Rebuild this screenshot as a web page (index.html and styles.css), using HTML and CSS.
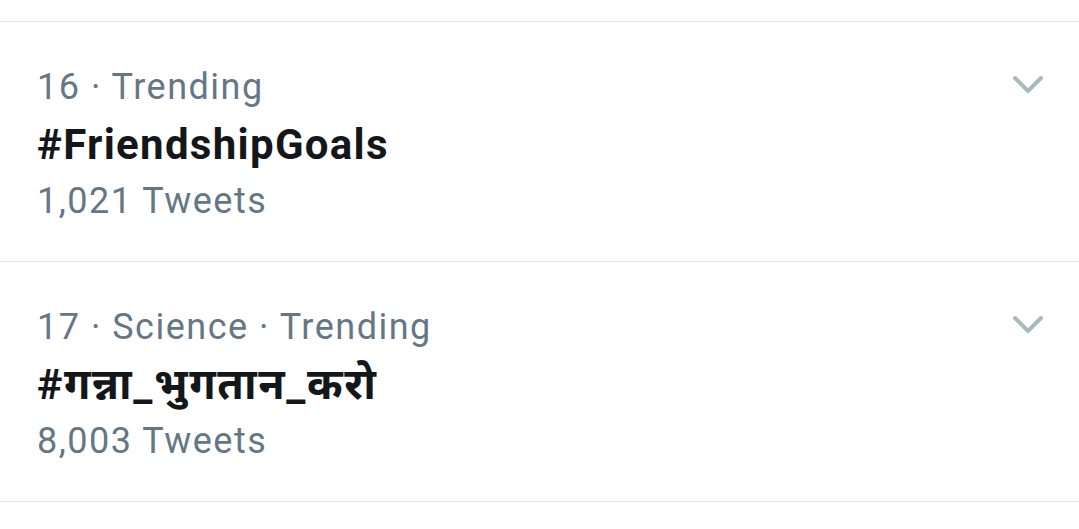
FILE: index.html
```html
<!DOCTYPE html>
<html>
<head>
<meta charset="utf-8">
<link rel="stylesheet" href="styles.css">
</head>
<body>
<div class="top-space"></div>
<div class="list">
  <div class="trend">
    <div class="info">
      <div class="meta">16 · Trending</div>
      <div class="name">#FriendshipGoals</div>
      <div class="count">1,021 Tweets</div>
    </div>
    <svg class="chev" width="32" height="20" viewBox="0 0 32 20"><path d="M3 3 L16 16 L29 3" fill="none" stroke="#aab8c2" stroke-width="4" stroke-linecap="round" stroke-linejoin="round"/></svg>
  </div>
  <div class="trend">
    <div class="info">
      <div class="meta">17 · Science · Trending</div>
      <div class="name hindi">#गन्ना_भुगतान_करो</div>
      <div class="count">8,003 Tweets</div>
    </div>
    <svg class="chev" width="32" height="20" viewBox="0 0 32 20"><path d="M3 3 L16 16 L29 3" fill="none" stroke="#aab8c2" stroke-width="4" stroke-linecap="round" stroke-linejoin="round"/></svg>
  </div>
</div>
</body>
</html>
```
FILE: styles.css
```css
html, body {
  margin: 0;
  padding: 0;
  background: #ffffff;
  font-family: Roboto, "Noto Sans", "Noto Sans Devanagari", sans-serif;
}
.top-space {
  height: 21px;
}
.list {
  border-bottom: 1px solid #dfe3e6;
}
.trend {
  display: flex;
  justify-content: space-between;
  align-items: flex-start;
  border-top: 1px solid #dfe3e6;
  padding: 37px 35px 31px 37px;
}
.info {
  display: flex;
  flex-direction: column;
}
.meta, .count {
  font-size: 36px;
  line-height: 57px;
  letter-spacing: 1.5px;
  color: #657786;
  height: 57px;
}
.name {
  font-size: 42px;
  line-height: 57px;
  letter-spacing: 1.3px;
  height: 57px;
  font-weight: 700;
  color: #14171a;
}
.name.hindi {
  font-size: 43px;
  letter-spacing: 1.6px;
}
.chev {
  margin-top: 16px;
}
```
